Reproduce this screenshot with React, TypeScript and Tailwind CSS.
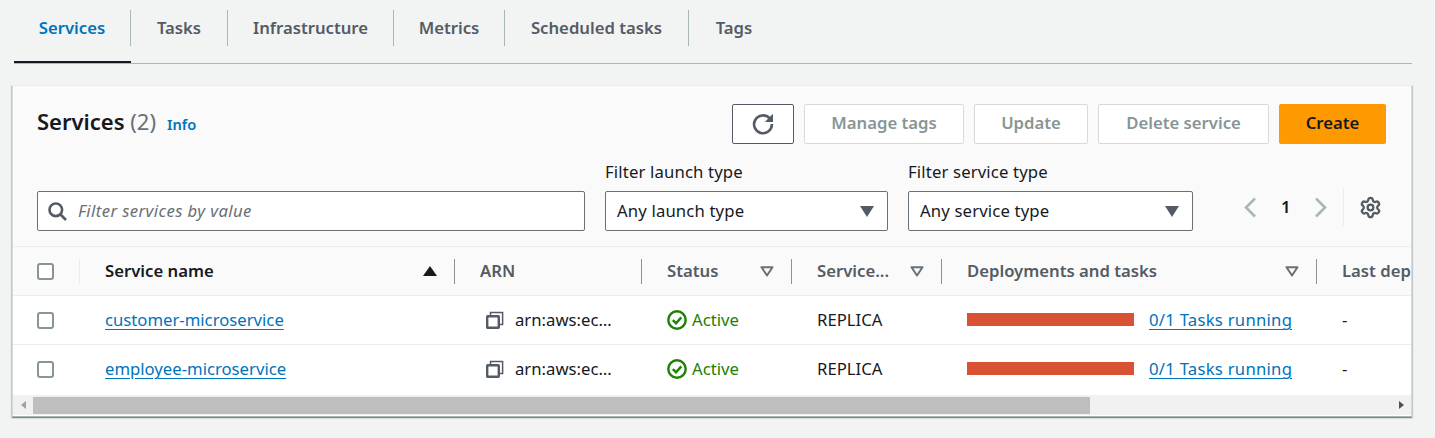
import { Settings } from "lucide-react";

const columns = "grid grid-cols-[67px_375px_187px_150px_150px_375px_200px] w-max";

const tabs = [
  { label: "Services", width: "w-[117px]" },
  { label: "Tasks", width: "w-[97px]" },
  { label: "Infrastructure", width: "w-[166px]" },
  { label: "Metrics", width: "w-[111px]" },
  { label: "Scheduled tasks", width: "w-[184px]" },
  { label: "Tags", width: "w-[90px]" },
];

const rows = ["customer-microservice", "employee-microservice"];

function HeaderCell({ label, sort, active, last }: { label: string; sort?: "up" | "down"; active?: boolean; last?: boolean }) {
  return (
    <div className="relative flex h-full items-center pl-[25px] pr-[18px]">
      <span className={`min-w-0 flex-1 whitespace-nowrap font-semibold ${active ? "text-[#16191f]" : "text-[#545b64]"}`}>{label}</span>
      {sort === "up" && (
        <svg width="14" height="10" viewBox="0 0 14 10" className="shrink-0">
          <path d="M7 0 L14 10 L0 10 Z" fill="#16191f" />
        </svg>
      )}
      {sort === "down" && (
        <svg width="14" height="11" viewBox="0 0 14 11" className="shrink-0">
          <path d="M1.5 1.2 H12.5 L7 9.5 Z" fill="none" stroke="#687078" strokeWidth="2" strokeLinejoin="round" />
        </svg>
      )}
      {!last && <span className="absolute right-0 top-[12px] h-[25px] w-px bg-[#879596]" />}
    </div>
  );
}

function Checkbox() {
  return <span className="block h-[17px] w-[17px] rounded-[3px] border-2 border-[#879596] bg-white" />;
}

function CopyIcon() {
  return (
    <svg width="18" height="18" viewBox="0 0 18 18" fill="none" stroke="#545b64">
      <rect x="1.2" y="5.2" width="11.6" height="11.6" rx="0.5" strokeWidth="2.4" />
      <path d="M4.5 4 V1.6 H16.6 V13.5 H14" strokeWidth="1.5" />
    </svg>
  );
}

function ActiveIcon() {
  return (
    <svg width="20" height="20" viewBox="0 0 20 20" fill="none" stroke="#1d8102">
      <circle cx="10" cy="10" r="8.7" strokeWidth="2.4" />
      <path d="M5.8 10.2 L9 13.2 L14.3 7.4" strokeWidth="2.4" />
    </svg>
  );
}

function RefreshIcon() {
  return (
    <svg width="22" height="22" viewBox="0 0 22 22" fill="none">
      <path d="M17.5 5.2 A8.9 8.9 0 1 0 19.9 11" stroke="#545b64" strokeWidth="2.6" />
      <path d="M21 0.8 V9 H12.8 Z" fill="#545b64" />
    </svg>
  );
}

function SearchIcon() {
  return (
    <svg width="19" height="19" viewBox="0 0 19 19" fill="none" stroke="#545b64" strokeWidth="2.6" className="shrink-0">
      <circle cx="7.8" cy="7.8" r="6.3" />
      <path d="M12.5 12.5 L18 18" />
    </svg>
  );
}

function Chevron({ right }: { right?: boolean }) {
  return (
    <svg width="13" height="21" viewBox="0 0 13 21" fill="none" stroke="#aab7b8" strokeWidth="2.6">
      <path d={right ? "M2 1.5 L11 10.5 L2 19.5" : "M11 1.5 L2 10.5 L11 19.5"} />
    </svg>
  );
}

function Select({ label, value, width }: { label: string; value: string; width: string }) {
  return (
    <div className={`${width} tracking-[0.15px]`}>
      <div className="mb-[7px] h-[24px] leading-[24px] text-[#16191f]">{label}</div>
      <div className="flex h-[40px] items-center justify-between rounded-[2px] border border-[#687078] bg-white pl-[11px] pr-[13px] text-[#16191f]">
        <span>{value}</span>
        <svg width="14" height="11" viewBox="0 0 14 11">
          <path d="M0 0 H14 L7 11 Z" fill="#545b64" />
        </svg>
      </div>
    </div>
  );
}

function GhostButton({ label, width }: { label: string; width: string }) {
  return (
    <button className={`h-[40px] rounded-[2px] border border-[#d5dbdb] bg-white pb-[2px] font-semibold text-[#879596] ${width}`}>
      {label}
    </button>
  );
}

export default function App() {
  return (
    <div className="h-[438px] w-[1435px] overflow-hidden bg-[#f2f3f3] text-[16.7px] font-['Noto_Sans',sans-serif]">
      {/* tabs */}
      <div className="ml-[14px] mr-[23px] flex h-[64px] border-b border-[#aab7b8] pt-[10px]">
        {tabs.map((tab, i) => (
          <div key={tab.label} className={`relative ${tab.width}`}>
            <div
              className={`flex h-[36px] items-center justify-center font-semibold ${i === 0 ? "text-[#0073bb]" : "text-[#545b64]"} ${i < tabs.length - 1 ? "border-r border-[#aab7b8]" : ""}`}
            >
              {tab.label}
            </div>
            {i === 0 && <div className="absolute inset-x-0 top-[51px] h-[2px] bg-[#16191f]" />}
          </div>
        ))}
      </div>

      {/* card */}
      <div className="ml-[12px] mt-[21px] h-[332px] w-[1400px] overflow-hidden border border-t-[#eaeded] border-x-[#d5dbdb] border-b-[#aab7b8] bg-white shadow-[0_1px_1px_0_rgba(0,28,36,0.3),1px_1px_1px_0_rgba(0,28,36,0.15),-1px_1px_1px_0_rgba(0,28,36,0.15)]">
        <div className="h-[161px] border-b border-[#eaeded] bg-[#fafafa] pl-[24px] pr-[25px] pt-[18px]">
          <div className="flex h-[40px] items-center justify-between">
            <div className="mt-[-6px] flex items-baseline gap-[11px]">
              <h2 className="text-[22px] font-semibold leading-[28px] text-[#16191f]">
                Services <span className="font-normal text-[#687078]">(2)</span>
              </h2>
              <span className="text-[14.6px] font-semibold text-[#0073bb]">Info</span>
            </div>
            <div className="flex gap-[10px]">
              <button className="flex h-[40px] w-[62px] items-center justify-center rounded-[2px] border border-[#545b64] bg-white">
                <RefreshIcon />
              </button>
              <GhostButton label="Manage tags" width="w-[160px]" />
              <GhostButton label="Update" width="w-[114px]" />
              <GhostButton label="Delete service" width="w-[171px]" />
              <button className="h-[40px] w-[107px] rounded-[2px] bg-[#ff9900] pb-[2px] font-semibold text-[#16191f]">Create</button>
            </div>
          </div>

          <div className="mt-[16px] flex items-start">
            <div className="mt-[31px] flex h-[40px] w-[548px] items-center gap-[11px] rounded-[2px] border border-[#687078] bg-white pl-[10px]">
              <SearchIcon />
              <span className="italic tracking-[0.4px] text-[#687078]">Filter services by value</span>
            </div>
            <Select label="Filter launch type" value="Any launch type" width="ml-[20px] w-[283px]" />
            <Select label="Filter service type" value="Any service type" width="ml-[20px] w-[285px]" />
            <div className="ml-[51px] mt-[27px] flex h-[40px] items-center">
              <Chevron />
              <span className="ml-[24px] mr-[26px] w-[7px] font-semibold text-[#16191f]">1</span>
              <Chevron right />
              <span className="ml-[16px] h-[38px] w-px bg-[#eaeded]" />
              <Settings size={23} strokeWidth={2.4} className="ml-[15px] text-[#545b64]" />
            </div>
          </div>
        </div>

        {/* table */}
        <div className="h-[148px] overflow-hidden bg-white">
          <div className={`${columns} h-[49px] border-b border-[#eaeded] bg-[#fafafa]`}>
            <div className="relative flex items-center pl-[24px]">
              <Checkbox />
              <span className="absolute right-0 top-[12px] h-[25px] w-px bg-[#eaeded]" />
            </div>
            <HeaderCell label="Service name" sort="up" active />
            <HeaderCell label="ARN" />
            <HeaderCell label="Status" sort="down" />
            <HeaderCell label="Service..." sort="down" />
            <HeaderCell label="Deployments and tasks" sort="down" />
            <HeaderCell label="Last dep" last />
          </div>
          {rows.map((name, i) => (
            <div key={name} className={`${columns} items-center text-[#16191f] ${i === 0 ? "h-[49px] border-b border-[#eaeded]" : "h-[48px]"}`}>
              <div className="pl-[24px]">
                <Checkbox />
              </div>
              <div className="pl-[25px]">
                <a className="text-[#0073bb] underline underline-offset-[3px]">{name}</a>
              </div>
              <div className="flex items-center gap-[11px] pl-[31px]">
                <CopyIcon />
                <span>arn:aws:ec…</span>
              </div>
              <div className="flex items-center gap-[5px] pl-[25px] text-[#1d8102]">
                <ActiveIcon />
                <span>Active</span>
              </div>
              <div className="pl-[25px]">REPLICA</div>
              <div className="flex items-center gap-[15px] pl-[25px]">
                <span className="h-[13px] w-[167px] bg-[#d95233]" />
                <a className="tracking-[0.25px] text-[#0073bb] underline underline-offset-[3px]">0/1 Tasks running</a>
              </div>
              <div className="pl-[25px]">-</div>
            </div>
          ))}
        </div>

        {/* scrollbar */}
        <div className="flex h-[20px] items-center bg-[#f1f1f1]">
          <svg width="20" height="20" viewBox="0 0 20 20" className="shrink-0">
            <path d="M8 10 L13 6 V14 Z" fill="#a0a0a0" />
          </svg>
          <div className="h-[17px] w-[1057px] bg-[#bebebe]" />
          <div className="flex-1" />
          <svg width="20" height="20" viewBox="0 0 20 20" className="shrink-0">
            <path d="M13 10 L8 6 V14 Z" fill="#505050" />
          </svg>
        </div>
      </div>
    </div>
  );
}
